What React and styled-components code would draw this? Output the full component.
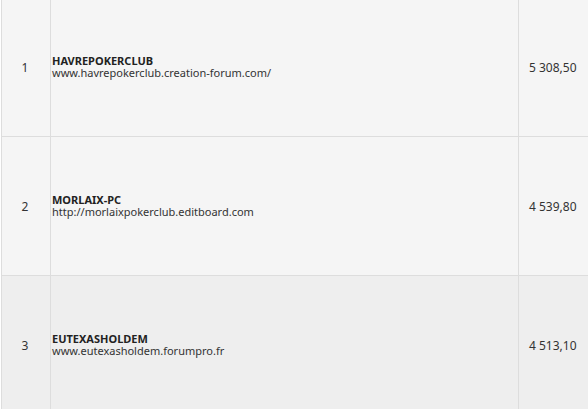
import React from "react";
import styled, { createGlobalStyle } from "styled-components";

const Global = createGlobalStyle`
  html, body { margin: 0; padding: 0; background: #ffffff; overflow: hidden; }
  body { font-family: "Noto Sans", "Open Sans", Arial, sans-serif; }
`;

const Table = styled.table`
  border-collapse: collapse;
  width: 640px;
  margin-top: -3px;
  margin-left: 1px;
  font-size: 11px;
  color: #333333;
`;

const Row = styled.tr`
  background: ${(p) => (p.$hover ? "#eeeeee" : "#f5f5f5")};
`;

const Cell = styled.td`
  border: 1px solid #dddddd;
  height: 138px;
  padding: 0;
  vertical-align: middle;
`;

const RankCell = styled(Cell)`
  width: 46px;
  text-align: center;
  padding-right: 2px;
  font-size: 12px;
  color: #333333;
`;

const ClubCell = styled(Cell)`
  width: 466px;
  padding-left: 1px;
  line-height: 12px;
`;

const ScoreCell = styled(Cell)`
  padding-left: 10px;
  text-align: left;
  font-size: 12px;
`;

const Name = styled.div`
  font-weight: bold;
  color: #222222;
`;

const Url = styled.div`
  color: #333333;
`;

const rows = [
  { rank: 1, name: "HAVREPOKERCLUB", url: "www.havrepokerclub.creation-forum.com/", score: "5 308,50" },
  { rank: 2, name: "MORLAIX-PC", url: "http://morlaixpokerclub.editboard.com", score: "4 539,80" },
  { rank: 3, name: "EUTEXASHOLDEM", url: "www.eutexasholdem.forumpro.fr", score: "4 513,10", hover: true },
];

export default function App() {
  return (
    <>
      <Global />
      <Table>
        <tbody>
          {rows.map((r) => (
            <Row key={r.rank} $hover={r.hover}>
              <RankCell>{r.rank}</RankCell>
              <ClubCell>
                <Name>{r.name}</Name>
                <Url>{r.url}</Url>
              </ClubCell>
              <ScoreCell>{r.score}</ScoreCell>
            </Row>
          ))}
        </tbody>
      </Table>
    </>
  );
}
